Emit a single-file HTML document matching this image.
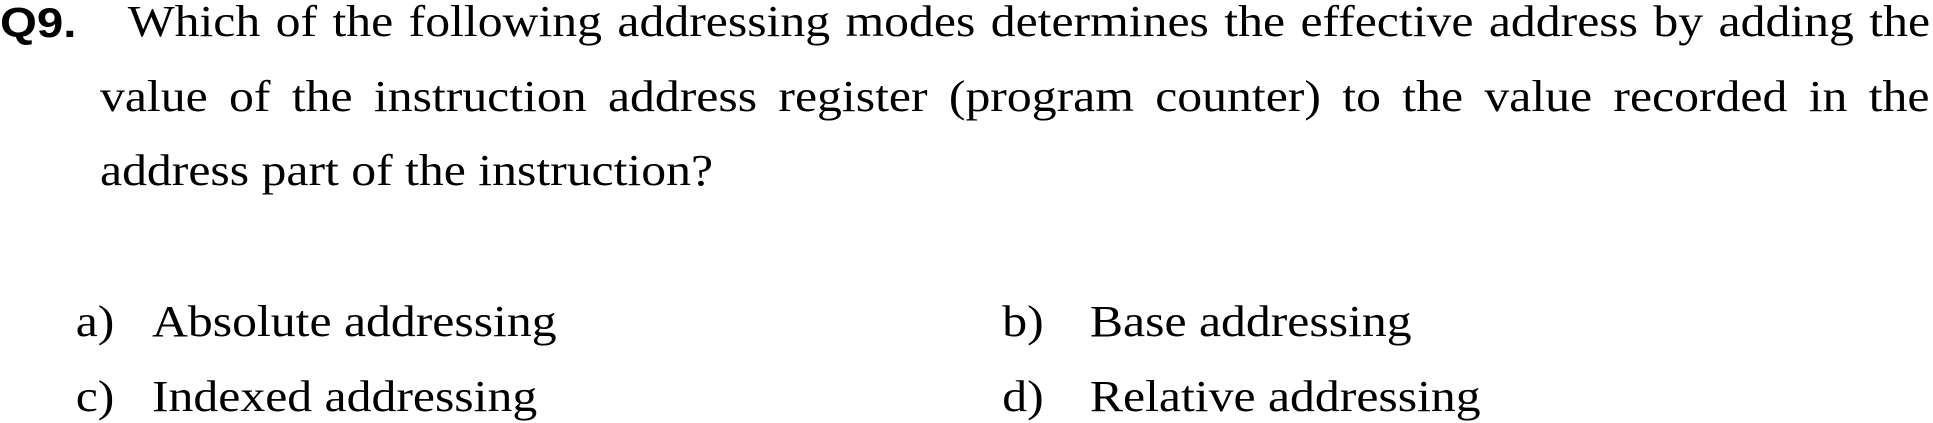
<!DOCTYPE html>
<html><head><style>
html,body{margin:0;padding:0;background:#fff;width:1933px;height:423px;overflow:hidden}
#w{position:absolute;left:0;top:0;width:1711px;height:423px;transform:scaleX(1.13);transform-origin:0 0}
.l{position:absolute;font-family:"Liberation Serif",serif;font-size:44px;line-height:44px;color:#000;white-space:nowrap}
.j{text-align:justify;text-align-last:justify;white-space:normal}
.q{position:absolute;font-family:"Liberation Sans",sans-serif;font-weight:bold;font-size:42px;line-height:42px;left:0;top:2px}
</style></head><body><div id="w">
<div class="q">Q9.</div>
<div class="l j" style="left:113px;top:0px;width:1595px">Which of the following addressing modes determines the effective address by adding the</div>
<div class="l j" style="left:88.5px;top:75px;width:1619px">value of the instruction address register (program counter) to the value recorded in the</div>
<div class="l" style="left:88.5px;top:149px">address part of the instruction?</div>
<div class="l" style="left:67px;top:300px">a)</div>
<div class="l" style="left:134.5px;top:300px">Absolute addressing</div>
<div class="l" style="left:887px;top:300px">b)</div>
<div class="l" style="left:964.5px;top:300px">Base addressing</div>
<div class="l" style="left:67px;top:375px">c)</div>
<div class="l" style="left:134.5px;top:375px">Indexed addressing</div>
<div class="l" style="left:887px;top:375px">d)</div>
<div class="l" style="left:964.5px;top:375px">Relative addressing</div>
</div></body></html>
